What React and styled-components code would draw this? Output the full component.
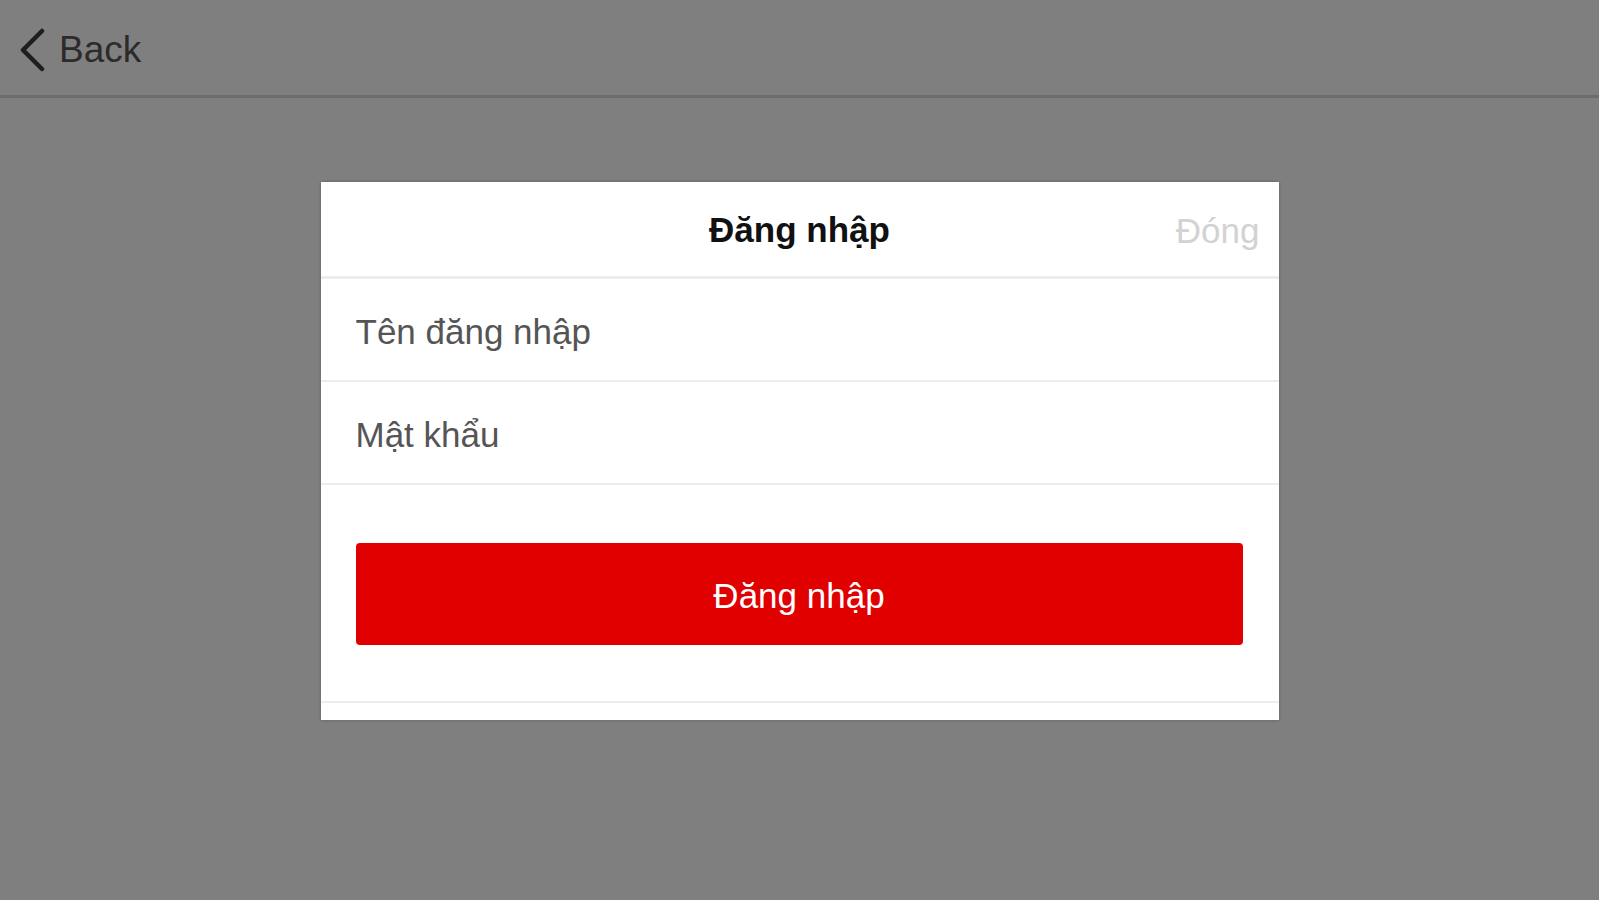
import React from "react";
import styled, { createGlobalStyle } from "styled-components";

const GlobalStyle = createGlobalStyle`
  html, body {
    margin: 0;
    padding: 0;
    background: #7f7f7f;
    font-family: "Liberation Sans", Arial, sans-serif;
  }
`;

const BackIcon = () => (
  <svg width="28" height="44" viewBox="0 0 28 44">
    <polyline
      points="24,3 5,22 24,41"
      fill="none"
      stroke="#1e1e1e"
      strokeWidth="4.5"
      strokeLinecap="round"
      strokeLinejoin="round"
    />
  </svg>
);

const App = () => {
  return (
    <Page>
      <GlobalStyle />
      <NavBar>
        <BackButton>
          <BackIcon />
          <span>Back</span>
        </BackButton>
      </NavBar>
      <Content>
        <Modal>
          <ModalHeader>
            <ModalTitle>Đăng nhập</ModalTitle>
            <CloseButton>Đóng</CloseButton>
          </ModalHeader>
          <Field placeholder="Tên đăng nhập" />
          <Field type="password" placeholder="Mật khẩu" />
          <ButtonArea>
            <SubmitButton>Đăng nhập</SubmitButton>
          </ButtonArea>
          <ModalFooter />
        </Modal>
      </Content>
    </Page>
  );
};

const Page = styled.div`
  min-height: 100vh;
  background: #7f7f7f;
`;

const NavBar = styled.div`
  height: 95px;
  display: flex;
  align-items: center;
  padding-left: 18px;
  border-bottom: 3px solid #6c6c6c;
`;

const BackButton = styled.div`
  display: flex;
  align-items: center;
  gap: 13px;
  color: #2b2b2b;
  font-size: 37px;
  cursor: pointer;
  margin-top: 5px;
`;

const Content = styled.div`
  display: flex;
  justify-content: center;
  padding-top: 84px;
`;

const Modal = styled.div`
  width: 958px;
  background: #fff;
  box-shadow: 0 0 3px rgba(0, 0, 0, 0.25);
  display: flex;
  flex-direction: column;
`;

const ModalHeader = styled.div`
  position: relative;
  height: 94px;
  display: flex;
  align-items: center;
  justify-content: center;
  border-bottom: 3px solid #ececec;
`;

const ModalTitle = styled.div`
  font-size: 35px;
  font-weight: bold;
  color: #111;
  margin-top: 2px;
`;

const CloseButton = styled.div`
  position: absolute;
  right: 19px;
  top: 50%;
  transform: translateY(-45%);
  font-size: 35px;
  color: #d2d2d2;
  cursor: pointer;
`;

const Field = styled.input`
  height: 103px;
  box-sizing: border-box;
  border: none;
  border-bottom: 2px solid #ececec;
  padding: 5px 35px 0;
  font-family: "Liberation Sans", Arial, sans-serif;
  font-size: 35px;
  color: #333;
  outline: none;
  background: #fff;

  &::placeholder {
    color: #555;
  }
`;

const ButtonArea = styled.div`
  padding: 58px 36px 56px 35px;
`;

const SubmitButton = styled.button`
  width: 100%;
  height: 102px;
  border: none;
  border-radius: 4px;
  background: #e00000;
  color: #fff;
  font-family: "Liberation Sans", Arial, sans-serif;
  font-size: 35px;
  padding-top: 4px;
  cursor: pointer;
`;

const ModalFooter = styled.div`
  height: 17px;
  border-top: 2px solid #ececec;
`;

export default App;
